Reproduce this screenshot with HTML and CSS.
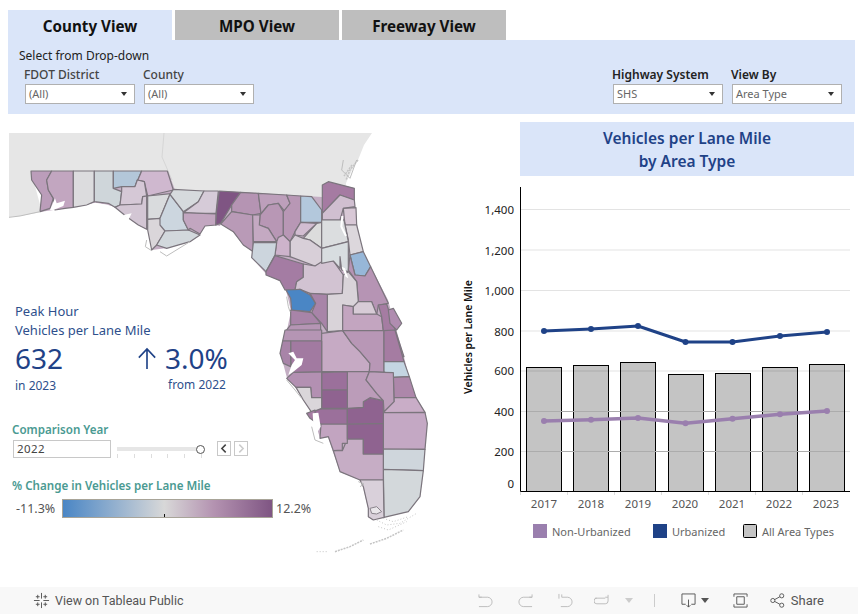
FILE: index.html
```html
<!DOCTYPE html>
<html lang="en">
<head>
<meta charset="utf-8">
<title>Vehicles per Lane Mile</title>
<link rel="stylesheet" href="styles.css">
</head>
<body>
<nav class="tabs">
  <div class="tab active">County View</div>
  <div class="tab">MPO View</div>
  <div class="tab">Freeway View</div>
</nav>
<section class="filters">
  <div class="filters-left">
    <div class="filters-title">Select from Drop-down</div>
    <div class="filter-row">
      <div class="filter"><div class="filter-label">FDOT District</div><div class="select"><span>(All)</span><i class="caret"></i></div></div>
      <div class="filter"><div class="filter-label">County</div><div class="select"><span>(All)</span><i class="caret"></i></div></div>
    </div>
  </div>
  <div class="filter-row">
    <div class="filter"><div class="filter-label strong">Highway System</div><div class="select"><span>SHS</span><i class="caret"></i></div></div>
    <div class="filter"><div class="filter-label strong">View By</div><div class="select"><span>Area Type</span><i class="caret"></i></div></div>
  </div>
</section>
<main class="main">
  <section class="left">
    <svg class="map" viewBox="0 114 460 473" aria-hidden="true">
      <polygon fill="#e6e6e6" points="9,133 372,133 364,145 358,160 352,170 346,183 345,200 300,197 175,192 168,172 31,171 42,212 20,216 9,217"/>
      <polyline class="river" points="164,133 162,157 172,180"/>
      <polyline class="chain" points="358,160 350,170 346,180"/>
      <polyline class="chain" points="352,165 344,176"/>
      <polygon fill="#c4aec4" points="31,171 168,171 175,190 240,192 322,197 323,185 328,182 354,188 354,200 357,225 363,252 371,267 388,300 404,357 409,377 416,397 425,412 427,423 425,449 423,470 420,497 408,512 384,517 373,520 368,517 368,508 363,487 360,480 340,472 333,452 328,437 320,438 312,413 303,400 296,388 287,378 283,363 280,353 283,341 287,330 291,311 286,290 280,281 267,275 252,258 253,252 243,245 233,232 221,223 220,226 215,225 205,226 200,234 190,242 167,248 152,250 148,230 138,225 127,217 115,207 108,205 95,203 73,207 40,212 42,195 32,180"/>
      <g transform="translate(0 130) scale(.33333)">
        <polygon class="co" fill="#bb9dba" points="93,123 155,123 140,150 145,180 160,205 150,235 120,245 125,195 95,150"/>
        <polygon class="co" fill="#c2a6c0" points="155,123 220,123 220,232 195,235 165,240 160,205 145,180 140,150"/>
        <polygon class="co" fill="#dcdcde" points="220,123 283,123 283,215 260,225 220,232"/>
        <polygon class="co" fill="#cfd6da" points="283,123 340,123 340,175 365,185 360,225 345,232 325,220 283,215"/>
        <polygon class="co" fill="#b3c7d9" points="340,123 425,123 405,170 365,170 340,175"/>
        <polygon class="co" fill="#cfb8cf" points="425,123 502,123 520,180 443,198 433,155 412,150 405,170"/>
        <polygon class="co" fill="#d5c8d6" points="365,170 405,170 412,150 433,155 440,198 428,200 425,222 360,225 365,185"/>
        <polygon class="co" fill="#d3c6d4" points="345,232 360,225 425,222 428,200 440,198 440,298 415,285 380,260"/>
        <polygon class="co" fill="#d9dbdd" points="443,198 520,190 510,193 480,265 443,268"/>
        <polygon class="co" fill="#dad6da" points="443,268 480,265 495,303 470,345 455,360 443,300"/>
        <polygon class="co" fill="#ccd6df" points="510,193 550,245 550,270 565,300 495,303 480,285 480,265"/>
        <polygon class="co" fill="#d2d8dc" points="495,303 565,300 600,315 570,335 500,355 470,345"/>
        <polygon class="co" fill="#d6dadd" points="520,178 612,183 595,215 550,245 510,193"/>
        <polygon class="co" fill="#d6cbd8" points="612,183 655,183 648,250 590,250 550,248 595,215"/>
        <polygon class="co" fill="#c2a6c0" points="550,248 648,252 648,285 615,288 600,312 570,295 565,300 550,270"/>
        <polygon class="white" points="150,240 165,205 170,220 195,212 190,228 160,240"/>
        <polygon class="white" points="250,232 285,218 325,225 325,235 290,232 265,235"/>
        <polygon class="white" points="370,255 395,250 385,270"/>
        <polyline class="coast" points="27,262 60,258 120,245"/>
        <polyline class="coast" points="440,330 436,350 455,362"/>
        <polyline class="coast" points="480,365 500,378 570,335"/>
      </g>
      <g transform="translate(200 160) scale(.33333)">
        <polygon class="co" fill="#7f5583" points="58,93 122,97 95,135 62,190 47,195 50,150"/>
        <polygon class="co" fill="#b594b3" points="122,97 175,100 183,160 158,165 95,155 95,135"/>
        <polygon class="co" fill="#b99ab7" points="62,192 95,155 158,165 160,275 130,255 100,215"/>
        <polygon class="co" fill="#bd9fbb" points="175,100 260,105 270,130 255,155 235,130 205,135 180,165 183,160"/>
        <polygon class="co" fill="#b897b5" points="180,165 205,135 235,130 250,155 250,225 230,245 205,205 178,195"/>
        <polygon class="co" fill="#c4a9c2" points="158,165 180,165 178,195 205,205 230,245 160,245"/>
        <polygon class="co" fill="#b897b5" points="260,105 302,108 302,187 285,215 270,245 250,225 250,155 270,130"/>
        <polygon class="co" fill="#b3c8dc" points="302,108 335,110 365,150 365,187 302,187"/>
        <polygon class="co" fill="#a57ba2" points="367,75 385,65 463,85 463,120 420,105 367,160"/>
        <polygon class="co" fill="#d0bfd0" points="367,180 367,160 420,105 463,120 465,140 430,145 420,180"/>
        <polygon class="co" fill="#d8c8d6" points="430,145 468,143 470,195 435,195"/>
        <polygon class="co" fill="#dcd7dc" points="432,180 435,195 470,195 490,275 450,285 445,240"/>
        <polygon class="co" fill="#dcdcdc" points="365,187 350,190 310,235 330,240 365,265"/>
        <polygon class="co" fill="#d2bdd1" points="302,187 350,190 310,228 285,225 285,215"/>
        <polygon class="co" fill="#dbdddf" points="365,180 432,180 445,245 365,265"/>
        <polygon class="co" fill="#d8cfd8" points="270,245 285,225 310,235 330,240 365,265 365,310 345,318 270,290"/>
        <polygon class="co" fill="#cdb3cb" points="230,245 235,232 250,225 270,245 270,290 225,285"/>
        <polygon class="co" fill="#ccd5dd" points="160,248 230,248 225,285 198,335 155,293"/>
        <polygon class="co" fill="#a47ca3" points="225,287 310,312 310,352 290,365 285,390 255,390 240,362 198,345 198,335"/>
        <polygon class="co" fill="#d2c3d2" points="290,365 310,352 310,312 345,318 365,305 400,303 430,345 427,400 382,403 330,400 300,388 285,390"/>
        <polygon class="co" fill="#d8dde0" points="365,265 445,245 445,285 445,335 425,330 420,290 420,325 400,303 365,310"/>
        <polygon class="co" fill="#97b7d8" points="450,285 490,275 512,320 495,348 465,345"/>
        <polygon class="co" fill="#b694b4" points="445,330 450,285 465,345 495,348 512,320 565,430 535,435 530,465 515,425 475,425 470,365"/>
        <polygon class="co" fill="#d9d3d9" points="382,403 427,400 430,345 445,335 470,365 475,425 460,440 428,435 428,512 382,515"/>
        <polygon class="co" fill="#4a86c5" points="258,390 300,388 330,405 347,430 330,455 275,450 272,415"/>
        <polygon class="co" fill="#a884a8" points="330,400 382,403 382,515 365,490 335,458 347,430"/>
        <polygon class="co" fill="#a884a8" points="272,450 335,458 362,490 272,495"/>
        <polygon class="co" fill="#b595b4" points="272,495 362,490 362,540 250,540 260,510"/>
        <polygon class="co" fill="#c3a5c0" points="428,435 460,440 460,462 530,462 545,470 550,512 428,512"/>
        <polygon class="co" fill="#d7cbd6" points="460,440 475,425 515,425 530,462 460,462"/>
        <polygon class="co" fill="#a57ca2" points="535,435 560,432 612,590 552,600 550,512 545,470"/>
        <polygon class="co" fill="#b08db0" points="565,450 580,445 605,490 590,510 570,490"/>
        <polygon class="white" points="425,320 437,350 445,355 435,325"/>
        <polyline class="strip" points="427,168 424,200 438,228"/>
        <polyline class="coast" points="430,0 425,30 450,55 470,0"/>
        <polyline class="coast" points="260,410 265,440 270,455"/>
      </g>
      <g transform="translate(260 330) scale(.33333)">
        <polygon class="co" fill="#b595b4" points="75,0 185,0 185,33 68,33"/>
        <polygon class="co" fill="#c6aac4" points="185,10 248,2 275,40 300,65 330,100 328,125 185,125"/>
        <polygon class="co" fill="#b897b6" points="248,2 372,2 372,95 372,127 328,125 330,100 300,65 275,40"/>
        <polygon class="co" fill="#a57ca2" points="372,2 405,0 432,95 372,95"/>
        <polygon class="co" fill="#c4d5e2" points="372,95 432,95 448,140 400,142 372,125"/>
        <polygon class="co" fill="#ad87aa" points="400,142 448,140 468,203 402,203"/>
        <polygon class="co" fill="#c9adc7" points="402,203 468,203 495,247 370,248 402,215"/>
        <polygon class="co" fill="#c4a8c4" points="370,248 495,247 502,280 495,358 370,357"/>
        <polygon class="co" fill="#cfd6dc" points="370,357 495,358 490,422 370,418"/>
        <polygon class="co" fill="#d3d8db" points="370,418 490,422 480,500 445,545 372,562"/>
        <polygon class="co" fill="#c6adc5" points="220,362 247,362 262,327 310,327 310,372 370,372 370,450 300,450 240,425"/>
        <polygon class="co" fill="#d9d0da" points="300,450 370,450 372,562 340,570 325,560 325,535 310,470"/>
        <polygon class="co" fill="#c2a4c0" points="183,282 262,282 262,340 247,340 247,360 220,362 205,320 180,325"/>
        <polygon class="co" fill="#8f6390" points="262,282 370,280 370,372 310,372 310,327 262,327"/>
        <polygon class="co" fill="#9b709b" points="155,237 262,237 262,282 185,282 165,275"/>
        <polygon class="co" fill="#8f6390" points="262,235 310,232 310,215 330,203 370,212 370,280 262,282"/>
        <polygon class="co" fill="#bb9cb9" points="262,125 328,125 318,150 350,190 370,212 330,203 310,215 310,232 262,235"/>
        <polygon class="co" fill="#bd9fbb" points="328,125 372,127 400,128 402,215 372,245 370,212 350,190 318,150"/>
        <polygon class="co" fill="#9b709b" points="185,128 262,125 262,180 185,180"/>
        <polygon class="co" fill="#8f6390" points="185,180 262,180 262,235 185,235"/>
        <polygon class="co" fill="#b390b2" points="100,127 185,125 185,203 155,203 152,172 108,172 80,145"/>
        <polygon class="co" fill="#dad6da" points="108,172 152,172 155,203 185,203 185,235 155,247 130,210"/>
        <polygon class="co" fill="#a27aa1" points="92,33 185,33 185,125 100,127 92,95"/>
        <polygon class="co" fill="#a884a8" points="68,33 92,33 92,110 70,100 60,70"/>
        <polygon class="co" fill="#a57ca2" points="140,250 165,240 165,275 150,265"/>
        <polygon class="white" points="85,70 100,65 110,85 130,85 125,105 100,125 85,135 95,105 105,90"/>
        <polygon class="white" points="158,250 175,248 182,290 170,310 160,285"/>
        <polyline class="tip" points="330,535 350,530 365,545 350,552 335,550 330,535"/>
        <polyline class="coast" points="80,150 105,180 125,205"/>
        <polyline class="coast" points="155,290 165,330 190,340"/>
        <polyline class="coast" points="295,455 312,462 300,470"/>
        <polyline class="keys" points="350,570 380,585 420,580 470,550"/>
        <polyline class="keys" points="370,565 400,575 445,560"/>
        <polyline class="keys" points="355,590 385,600 440,575"/>
        <polyline class="chain" points="330,642 380,625 430,600"/>
        <polyline class="chain" points="225,665 270,650 310,630"/>
        <polyline class="keys" points="170,665 205,665"/>
      </g>
    </svg>
    <div class="kpi-title">Peak Hour<br>Vehicles per Lane Mile</div>
    <div class="kpi-row">
      <div class="kpi-a">
        <div class="kpi-num">632</div>
        <div class="kpi-sub in">in 2023</div>
      </div>
      <div class="kpi-b">
        <div class="kpi-change">
          <svg class="arrow" viewBox="0 0 22 25"><path d="M11 24V2M2 11.500L11 2l9 9.500"/></svg>
          <span class="kpi-num">3.0%</span>
        </div>
        <div class="kpi-sub from">from 2022</div>
      </div>
    </div>
    <div class="teal first">Comparison Year</div>
    <div class="year-row">
      <div class="year-box">2022</div>
      <div class="slider"><div class="track"></div><div class="thumb"></div><div class="ticks"><i></i><i></i><i></i><i></i><i></i><i></i></div></div>
      <div class="steps">
        <div class="step"><svg viewBox="0 0 14 14"><path class="chev" d="M9 2.500L4.500 7 9 11.500"/></svg></div>
        <div class="step"><svg viewBox="0 0 14 14"><path class="chev off" d="M5 2.500L9.500 7 5 11.500"/></svg></div>
      </div>
    </div>
    <div class="teal second">% Change in Vehicles per Lane Mile</div>
    <div class="legend-row">
      <span class="range-lo">-11.3%</span>
      <div class="ramp"><i class="ramp-tick"></i></div>
      <span class="range-hi">12.2%</span>
    </div>
  </section>
  <section class="right">
    <h1 class="chart-title">Vehicles per Lane Mile<br>by Area Type</h1>
    <svg class="chart" viewBox="460 180 398 365">
      <g class="grid">
        <line x1="520" x2="850" y1="209.500" y2="209.500"/><line x1="520" x2="850" y1="250" y2="250"/>
        <line x1="520" x2="850" y1="290.500" y2="290.500"/><line x1="520" x2="850" y1="331" y2="331"/>
        <line x1="520" x2="850" y1="371" y2="371"/><line x1="520" x2="850" y1="411.500" y2="411.500"/>
        <line x1="520" x2="850" y1="451.500" y2="451.500"/>
      </g>
      <g class="bars">
        <rect x="526.500" y="367.500" width="35" height="124"/><rect x="573.500" y="365.500" width="35" height="126"/>
        <rect x="620.500" y="362.500" width="35" height="129"/><rect x="668.500" y="374.500" width="35" height="117"/>
        <rect x="715.500" y="373.500" width="35" height="118"/><rect x="762.500" y="367.500" width="35" height="124"/>
        <rect x="809.500" y="364.500" width="35" height="127"/>
      </g>
      <g class="grid over">
        <line x1="527" x2="561" y1="371" y2="371"/><line x1="574" x2="608" y1="371" y2="371"/><line x1="621" x2="655" y1="371" y2="371"/><line x1="763" x2="797" y1="371" y2="371"/><line x1="810" x2="844" y1="371" y2="371"/>
        <line x1="527" x2="844" y1="411.500" y2="411.500"/>
        <line x1="527" x2="844" y1="451.500" y2="451.500"/>
      </g>
      <polyline class="line navy" points="544,331 591,329 638,326 685.500,342 732.500,342 780,336 827,332"/>
      <g class="dots navy-dots">
        <circle cx="544" cy="331" r="3"/><circle cx="591" cy="329" r="3"/><circle cx="638" cy="326" r="3"/><circle cx="685.500" cy="342" r="3"/><circle cx="732.500" cy="342" r="3"/><circle cx="780" cy="336" r="3"/><circle cx="827" cy="332" r="3"/>
      </g>
      <polyline class="line lilac" points="544,421 591,419.700 638,418 685.500,423.300 732.500,418.700 780,414.300 827,411"/>
      <g class="dots lilac-dots">
        <circle cx="544" cy="421" r="3"/><circle cx="591" cy="419.700" r="3"/><circle cx="638" cy="418" r="3"/><circle cx="685.500" cy="423.300" r="3"/><circle cx="732.500" cy="418.700" r="3"/><circle cx="780" cy="414.300" r="3"/><circle cx="827" cy="411" r="3"/>
      </g>
      <path class="axis" d="M520.500 187V491.500H850"/>
      <path class="xticks" d="M520.500 492v3M567.500 492v3M614.500 492v3M661.500 492v3M708.500 492v3M755.500 492v3M802.500 492v3"/>
      <g class="ylab">
        <text x="514" y="214">1,400</text><text x="514" y="255">1,200</text><text x="514" y="295">1,000</text>
        <text x="514" y="336">800</text><text x="514" y="375">600</text><text x="514" y="416">400</text>
        <text x="514" y="456">200</text><text x="514" y="488">0</text>
      </g>
      <text class="ytitle" transform="translate(472 337) rotate(-90)">Vehicles per Lane Mile</text>
      <g class="xlab">
        <text x="544" y="508">2017</text><text x="591" y="508">2018</text><text x="638" y="508">2019</text>
        <text x="685" y="508">2020</text><text x="732" y="508">2021</text><text x="779" y="508">2022</text><text x="826" y="508">2023</text>
      </g>
      <rect class="sw-lilac" x="533" y="524" width="14" height="14"/>
      <text class="leg" x="552" y="536">Non-Urbanized</text>
      <rect class="sw-navy" x="653" y="524" width="14" height="14"/>
      <text class="leg" x="672" y="536">Urbanized</text>
      <rect class="sw-grey" x="743.500" y="524.500" width="13" height="13" rx="1"/>
      <text class="leg" x="762" y="536">All Area Types</text>
    </svg>
  </section>
</main>
<footer class="footer">
  <div class="public">
    <svg class="logo" viewBox="0 0 18 18"><path d="M9 1v6M9 11v6M1 9h6M11 9h6M5 3v4M3 5h4M13 3v4M11 5h4M5 11v4M3 13h4M13 11v4M11 13h4"/></svg>
    <span>View on Tableau Public</span>
  </div>
  <div class="tools">
    <svg class="ti dim" viewBox="0 0 16 16"><path d="M1 1.500v3h9a5 5 0 0 1 0 10H1M1 4.500h3"/></svg>
    <svg class="ti dim" viewBox="0 0 16 16"><path d="M15 1.500v3H6a5 5 0 0 0 0 10h9M15 4.500h-3"/></svg>
    <svg class="ti dim" viewBox="0 0 16 16"><path d="M1 1v5M4 1.500v3h6a5 5 0 0 1 0 10H3"/></svg>
    <svg class="ti dim" viewBox="0 0 16 16"><path d="M1 5.500h11M15 2v2.500M3 5.500a3 3 0 0 0 0 6h9a3 3 0 0 0 3-3V4.500h-3"/></svg>
    <i class="tri dim-tri"></i>
    <i class="sep"></i>
    <svg class="ti" viewBox="0 0 16 16"><path d="M5 12H1V1h14v11h-4M8 7v8M6 13l2 2 2-2"/></svg>
    <i class="tri"></i>
    <svg class="ti full" viewBox="0 0 16 16"><path d="M1 4V1h14v3M1 12v3h14v-3M4 4h8v8H4z"/></svg>
    <div class="share">
      <svg class="ti" viewBox="0 0 16 16"><circle cx="3" cy="8" r="2.200"/><circle cx="12.500" cy="3" r="2.200"/><circle cx="12.500" cy="13" r="2.200"/><path d="M5 7l5.500-3M5 9l5.500 3"/></svg>
      <span>Share</span>
    </div>
  </div>
</footer>
</body>
</html>
```

FILE: styles.css
```css
* { box-sizing: border-box; }
html, body { margin: 0; height: 614px; overflow: hidden; background: #fff; }
body { font-family: "Noto Sans", "Open Sans", sans-serif; color: #333; width: 858px; }

.tabs { display: flex; gap: 3px; padding: 10px 0 0 8px; height: 40px; }
.tab { width: 164px; height: 30px; background: #bebebe; color: #111; font-size: 15.200px; font-weight: 700; line-height: 32px; text-align: center; }
.tab.active { background: #dae5f9; }

.filters { width: 847px; height: 74px; margin-left: 8px; background: #dae5f9; padding: 0 13px 10px 11px; display: flex; justify-content: space-between; align-items: flex-end; }
.filters-title { font-size: 12px; line-height: 16px; color: #222; margin-bottom: 2px; }
.filter-row { display: flex; gap: 9px; padding-left: 6px; }
.filters-left .filter-row { padding-left: 6px; }
.filter { width: 110px; }
.filter-label { font-size: 12px; line-height: 18px; padding-bottom: 1px; height: 18px; color: #444; font-weight: 500; margin-left: -1px; }
.filter-label.strong { color: #222; font-weight: 600; }
.select { height: 20px; background: #fff; border: 1px solid #b0b0b0; display: flex; align-items: center; justify-content: space-between; padding: 0 7px 2px 3px; font-size: 11px; color: #666; }
.caret { width: 0; height: 0; margin-top: 2px; border-left: 3.500px solid transparent; border-right: 3.500px solid transparent; border-top: 4px solid #333; }

.main { display: grid; grid-template-columns: 460px 398px; height: 473px; }
.left { position: relative; padding-top: 188px; }
.map { position: absolute; left: 0; top: 0; width: 460px; height: 473px; filter: blur(.35px); }
.co { stroke: #7b757d; stroke-width: 1.200px; stroke-linejoin: round; vector-effect: non-scaling-stroke; }
.white { fill: #fff; }
.river { fill: none; stroke: #d6d6d6; stroke-width: 1px; }
.coast { fill: none; stroke: #bdbdbd; stroke-width: 1px; vector-effect: non-scaling-stroke; }
.strip { fill: none; stroke: #fff; stroke-width: 2px; vector-effect: non-scaling-stroke; }
.tip { fill: #e9e6ea; stroke: #8a848c; stroke-width: 1px; vector-effect: non-scaling-stroke; }
.keys { fill: none; stroke: #c4c4c4; stroke-width: 1px; stroke-dasharray: 1 2; vector-effect: non-scaling-stroke; }
.chain { fill: none; stroke: #c4c4c4; stroke-width: 1.500px; stroke-dasharray: 2 1; vector-effect: non-scaling-stroke; }

.kpi-title, .kpi-row, .teal, .year-row, .legend-row { position: relative; }
.kpi-title { margin-left: 15px; font-size: 13px; line-height: 19px; color: #2e4f8c; }
.kpi-row { display: flex; margin: 1px 0 0 15px; }
.kpi-a { width: 122px; }
.kpi-num { font-size: 28px; line-height: 34px; color: #1f4287; display: block; }
.kpi-sub { font-size: 12px; line-height: 16px; color: #2e4f8c; }
.kpi-sub.in { margin-top: 3px; }
.kpi-change { display: flex; align-items: center; gap: 8px; }
.arrow { width: 20px; height: 23px; fill: none; stroke: #1f4287; stroke-width: 1.800px; }
.from { margin: 2px 0 0 31px; }

.teal { margin-left: 12px; font-size: 11.600px; line-height: 16px; font-weight: 600; color: #4a9a92; }
.teal.first { margin-top: 28px; }
.teal.second { margin-top: 20px; }

.year-row { display: flex; align-items: flex-start; margin: 2px 0 0 13px; height: 18px; }
.year-box { width: 98px; height: 18px; border: 1px solid #c8c8c8; background: #fff; font-size: 11.500px; line-height: 16px; padding-left: 3px; color: #444; letter-spacing: .4px; }
.slider { position: relative; width: 88px; margin-left: 6px; height: 18px; }
.track { position: absolute; left: 0; right: 1px; top: 7px; height: 4px; background: #e6e6e6; }
.thumb { position: absolute; right: 0; top: 5px; width: 9px; height: 9px; border-radius: 50%; background: #fff; border: 1px solid #555; }
.ticks { position: absolute; left: 0; right: 3px; top: 14px; height: 4px; display: flex; justify-content: space-between; }
.ticks i { width: 1px; background: #ddd; }
.steps { display: flex; gap: 3px; margin: 1px 0 0 12px; }
.step { width: 14px; height: 15px; border: 1px solid #c8c8c8; background: #fff; }
.step svg { display: block; width: 12px; height: 13px; }
.chev { fill: none; stroke: #444; stroke-width: 1.800px; }
.chev.off { stroke: #ccc; }

.legend-row { display: flex; align-items: center; margin: 5px 0 0 16px; height: 19px; font-size: 12.500px; color: #555; }
.range-lo { width: 46px; }
.ramp { position: relative; width: 211px; height: 19px; border: 1px solid #a8a498; background: linear-gradient(90deg, #4a86c5 0%, #d8d8d8 48.500%, #b493b1 72%, #7f5583 100%); }
.ramp-tick { position: absolute; left: 101px; bottom: 0; width: 1px; height: 3px; background: #111; }
.range-hi { margin-left: 3px; }

.right { padding-top: 8px; }
.chart-title { margin: 0 4px 4px 60px; height: 54px; background: #dae5f9; color: #1f4287; font-size: 15.500px; line-height: 23px; font-weight: 600; text-align: center; padding-top: 5px; }
.chart { display: block; width: 398px; height: 365px; font-family: "Noto Sans", sans-serif; }
.grid line { stroke: #e3e3e3; stroke-width: 1px; }
.grid.over line { stroke: #acacac; }
.bars rect { fill: #c4c4c4; stroke: #000; stroke-width: 1px; }
.line { fill: none; stroke-linejoin: round; }
.navy { stroke: #1f4287; stroke-width: 3px; }
.lilac { stroke: #9a7fae; stroke-width: 3.500px; }
.navy-dots { fill: #1f4287; }
.lilac-dots { fill: #9a7fae; }
.axis { fill: none; stroke: #000; stroke-width: 1px; }
.xticks { stroke: #ddd; stroke-width: 1px; }
.ylab text { font-size: 11.500px; fill: #222; text-anchor: end; }
.ytitle { font-size: 10.500px; font-weight: 600; fill: #111; text-anchor: middle; }
.xlab text { font-size: 11.500px; fill: #555; text-anchor: middle; }
.leg { font-size: 11px; fill: #666; }
.sw-lilac { fill: #9a7fae; }
.sw-navy { fill: #1f4287; }
.sw-grey { fill: #c4c4c4; stroke: #000; stroke-width: 1px; }

.footer { height: 27px; background: #f8f8f8; display: flex; justify-content: space-between; align-items: center; padding: 0 34px 0 33px; font-family: Roboto, sans-serif; font-size: 12.500px; color: #555; }
.public { display: flex; align-items: center; gap: 5px; }
.logo { width: 17px; height: 17px; fill: none; stroke: #555; stroke-width: 1px; }
.tools { display: flex; align-items: center; }
.ti { width: 15px; height: 15px; fill: none; stroke: #555; stroke-width: 1px; }
.ti.dim { stroke: #bbb; margin-right: 25px; }
.ti.dim:nth-child(3) { margin-right: 21px; }
.ti.dim:nth-child(4) { margin-right: 16px; }
.tri { width: 0; height: 0; border-left: 4px solid transparent; border-right: 4px solid transparent; border-top: 5px solid #555; margin: 0 24px 0 5px; }
.dim-tri { border-top-color: #ccc; margin: 0 21px 0 0; }
.sep { width: 1px; height: 13px; background: #ccc; margin-right: 26px; }
.full { margin-right: 22px; }
.share { display: flex; align-items: center; gap: 6px; font-size: 13px; }
```
